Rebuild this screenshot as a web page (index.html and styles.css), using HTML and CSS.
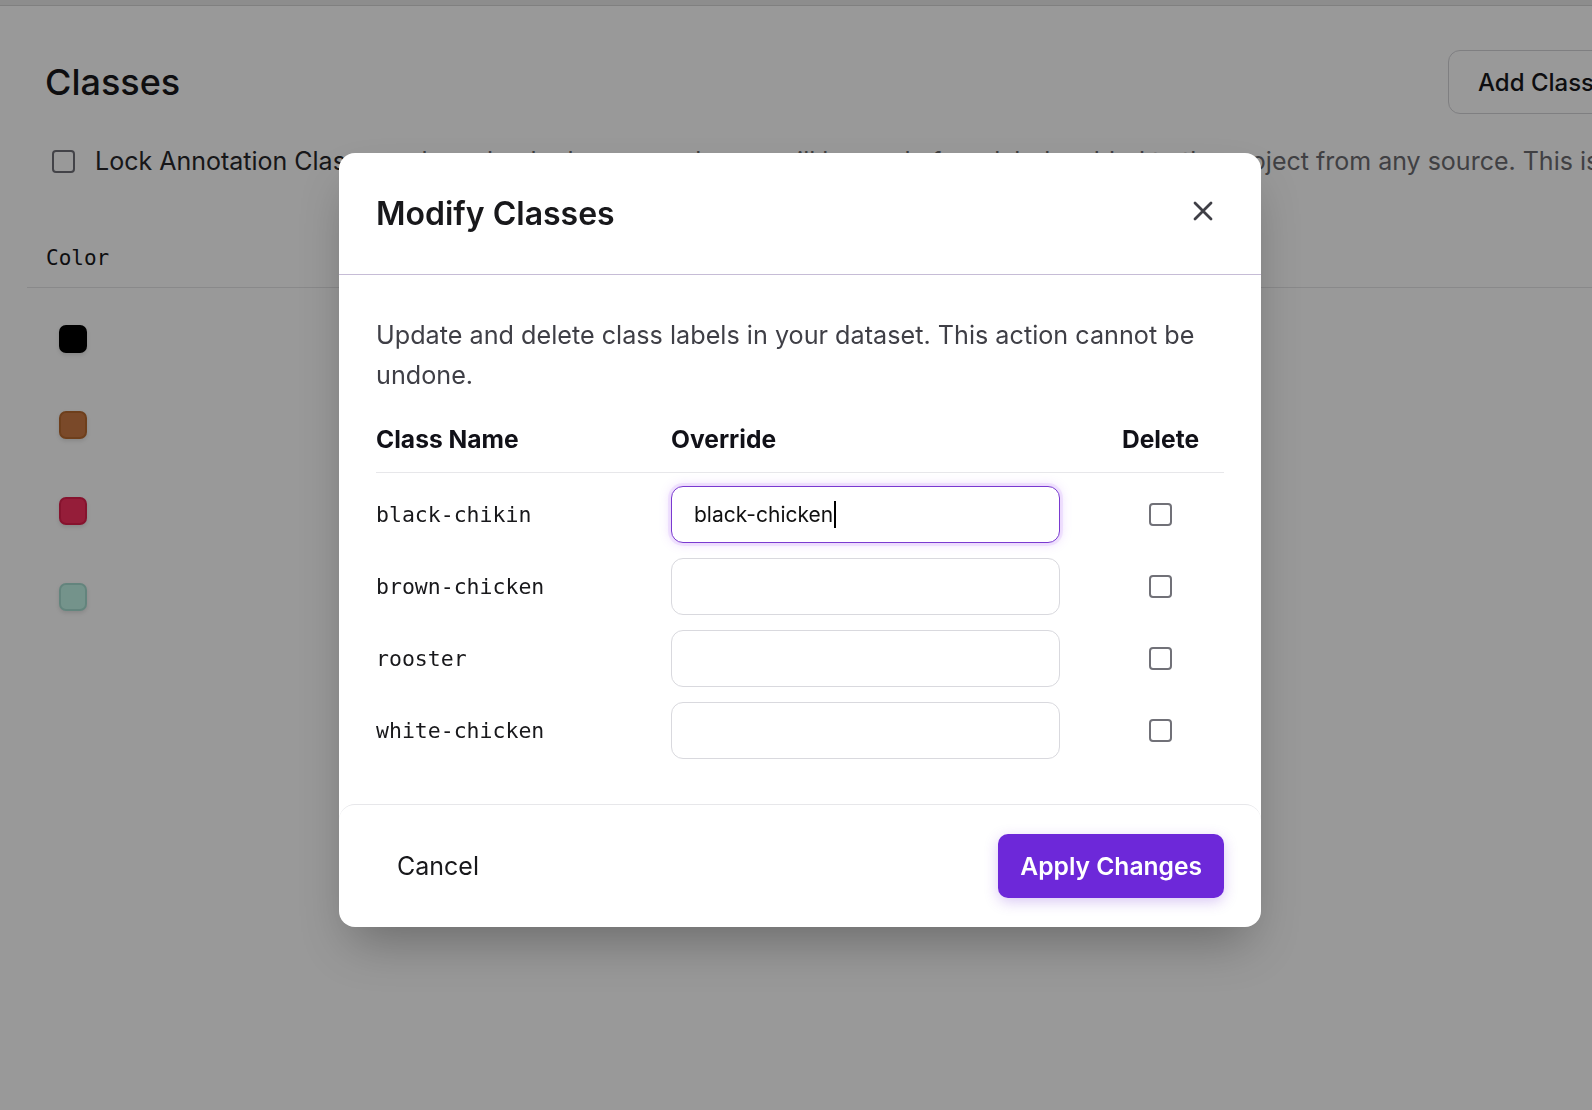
FILE: index.html
```html
<!DOCTYPE html>
<html lang="en">
<head>
<meta charset="utf-8">
<title>Classes</title>
<link rel="stylesheet" href="styles.css">
</head>
<body>
<div class="topbar"></div>
<main class="page">
  <header class="page-header">
    <h1 class="page-title">Classes</h1>
    <button class="btn-outline" type="button">Add Classes</button>
  </header>
  <label class="lock-row">
    <input type="checkbox" class="cb">
    <span class="lock-label">Lock Annotation Classes</span><span class="lock-desc">: when checked, no new classes will be made from labels added to the project from any source. This is useful for keeping your taxonomy clean.</span>
  </label>
  <div class="class-table">
    <div class="ct-head"><span class="ct-col">Color</span></div>
    <div class="ct-row"><span class="swatch swatch-black"></span></div>
    <div class="ct-row"><span class="swatch swatch-brown"></span></div>
    <div class="ct-row"><span class="swatch swatch-red"></span></div>
    <div class="ct-row"><span class="swatch swatch-teal"></span></div>
  </div>
</main>

<div class="overlay"></div>

<div class="modal" role="dialog" aria-labelledby="modal-title">
  <div class="modal-header">
    <h2 id="modal-title" class="modal-title">Modify Classes</h2>
    <button class="close-btn" type="button" aria-label="Close">
      <svg width="20" height="20" viewBox="0 0 20 20" fill="none" stroke="#3f3f46" stroke-width="2.8" stroke-linecap="round"><path d="M2 2 18 18M18 2 2 18"/></svg>
    </button>
  </div>
  <div class="modal-body">
    <p class="modal-desc">Update and delete class labels in your dataset. This action cannot be undone.</p>
    <div class="mc-head">
      <span>Class Name</span>
      <span>Override</span>
      <span class="c-del">Delete</span>
    </div>
    <div class="mc-rows">
      <div class="mc-row">
        <span class="mc-name">black-chikin</span>
        <div class="mc-input is-focused">black-chicken<span class="caret"></span></div>
        <span class="c-del"><input type="checkbox" class="cb"></span>
      </div>
      <div class="mc-row">
        <span class="mc-name">brown-chicken</span>
        <div class="mc-input"></div>
        <span class="c-del"><input type="checkbox" class="cb"></span>
      </div>
      <div class="mc-row">
        <span class="mc-name">rooster</span>
        <div class="mc-input"></div>
        <span class="c-del"><input type="checkbox" class="cb"></span>
      </div>
      <div class="mc-row">
        <span class="mc-name">white-chicken</span>
        <div class="mc-input"></div>
        <span class="c-del"><input type="checkbox" class="cb"></span>
      </div>
    </div>
  </div>
  <div class="modal-footer">
    <button class="btn-text" type="button">Cancel</button>
    <button class="btn-primary" type="button">Apply Changes</button>
  </div>
</div>
</body>
</html>
```

FILE: styles.css
```css
html, body {
  margin: 0;
  height: 100%;
  overflow: hidden;
  background: #ffffff;
}

body {
  font-family: Inter, "Noto Sans", sans-serif;
  color: #18181b;
}

.topbar {
  height: 5px;
  background: #ececec;
  border-bottom: 1px solid #d6d6d6;
}

.page {
  width: 1631px;
  padding: 44px 0 0 27px;
}

.page-header {
  display: flex;
  align-items: center;
  justify-content: space-between;
  padding-left: 18px;
}

.page-title {
  margin: 0;
  font-size: 36px;
  font-weight: 500;
  line-height: 44px;
  color: #18181b;
}

.btn-outline {
  width: 210px;
  height: 64px;
  padding: 0 0 0 29px;
  text-align: left;
  font-family: Inter, sans-serif;
  font-size: 24px;
  font-weight: 500;
  color: #18181b;
  background: #ffffff;
  border: 1px solid #d4d4d8;
  border-radius: 12px;
}

.lock-row {
  display: flex;
  align-items: center;
  margin-top: 31px;
  padding-left: 25px;
  font-size: 25px;
  line-height: 32px;
  white-space: nowrap;
}

.lock-row .cb {
  margin-right: 20px;
}

.lock-label {
  color: #27272a;
}

.lock-desc {
  color: #6b6b70;
}

.cb {
  appearance: none;
  -webkit-appearance: none;
  flex: none;
  width: 23px;
  height: 23px;
  margin: 0;
  box-sizing: border-box;
  border: 2px solid #717178;
  border-radius: 4px;
  background: #ffffff;
}

.class-table {
  margin-top: 51px;
}

.ct-head {
  padding: 16px 19px 15px;
  border-bottom: 1px solid #e4e4e7;
  font-family: "DejaVu Sans Mono", "Liberation Mono", monospace;
  font-size: 21px;
  line-height: 28px;
  color: #18181b;
}

.ct-row {
  padding: 37px 0 21px 32px;
  height: 28px;
}

.swatch {
  display: block;
  width: 28px;
  height: 28px;
  box-sizing: border-box;
  border-radius: 7px;
  border: 2px solid rgba(0, 0, 0, 0.12);
  box-shadow: 0 2px 4px rgba(0, 0, 0, 0.12);
}

.swatch-black { background: #000000; }
.swatch-brown { background: #cc7b45; border-color: #b8692f; }
.swatch-red { background: #f8315f; border-color: #e0204e; }
.swatch-teal { background: #c2f5e8; border-color: #a6ddd0; }

.overlay {
  position: fixed;
  inset: 0;
  background: rgba(0, 0, 0, 0.4);
}

.modal {
  position: absolute;
  top: 153px;
  left: 339px;
  width: 922px;
  background: #ffffff;
  border-radius: 16px;
  box-shadow: 0 25px 50px -12px rgba(0, 0, 0, 0.3);
}

.modal-header {
  height: 121px;
  display: flex;
  align-items: center;
  justify-content: space-between;
  padding: 0 48px 0 37px;
  border-bottom: 1px solid #c6bcd6;
}

.modal-title {
  margin: 0;
  font-size: 32px;
  font-weight: 600;
  line-height: 40px;
  color: #18181b;
}

.close-btn {
  display: flex;
  width: 20px;
  height: 20px;
  padding: 0;
  margin-bottom: 5px;
  border: none;
  background: none;
}

.modal-body {
  padding: 40px 37px 45px;
}

.modal-desc {
  margin: 0 0 28px;
  font-size: 25.2px;
  line-height: 40px;
  color: #3f3f46;
}

.mc-head,
.mc-row {
  display: grid;
  grid-template-columns: 295px 389px 1fr;
  align-items: center;
}

.mc-head {
  padding-bottom: 17px;
  border-bottom: 1px solid #e7e7ea;
  font-size: 24.6px;
  font-weight: 700;
  line-height: 32px;
  color: #111118;
}

.c-del {
  display: flex;
  justify-content: center;
  padding-left: 37px;
}

.mc-rows {
  display: flex;
  flex-direction: column;
  gap: 15px;
  padding-top: 13px;
}

.mc-name {
  font-family: "DejaVu Sans Mono", "Liberation Mono", monospace;
  font-size: 21.5px;
  color: #18181b;
}

.mc-input {
  display: flex;
  align-items: center;
  height: 57px;
  box-sizing: border-box;
  padding: 0 22px;
  border: 1px solid #d9d9de;
  border-radius: 12px;
  font-size: 21px;
  color: #111111;
  background: #ffffff;
}

.mc-input.is-focused {
  border-color: #7a3ad0;
  box-shadow: 0 0 0 3px rgba(168, 85, 247, 0.1), 0 0 12px rgba(168, 85, 247, 0.28);
}

.caret {
  display: inline-block;
  width: 2px;
  height: 27px;
  margin-left: 1px;
  background: #000000;
}

.modal-footer {
  height: 122px;
  display: flex;
  align-items: center;
  justify-content: space-between;
  padding: 0 37px;
  border-top: 1px solid #e7e7ea;
  border-radius: 16px;
}

.btn-text {
  height: 64px;
  padding: 0 21px;
  border: none;
  background: none;
  font-family: Inter, sans-serif;
  font-size: 25px;
  color: #18181b;
}

.btn-primary {
  height: 64px;
  padding: 0 22px;
  border: none;
  border-radius: 10px;
  background: #6d28d9;
  color: #ffffff;
  font-family: Inter, sans-serif;
  font-size: 24.6px;
  font-weight: 600;
  box-shadow: 0 4px 14px rgba(109, 40, 217, 0.25);
}
```
